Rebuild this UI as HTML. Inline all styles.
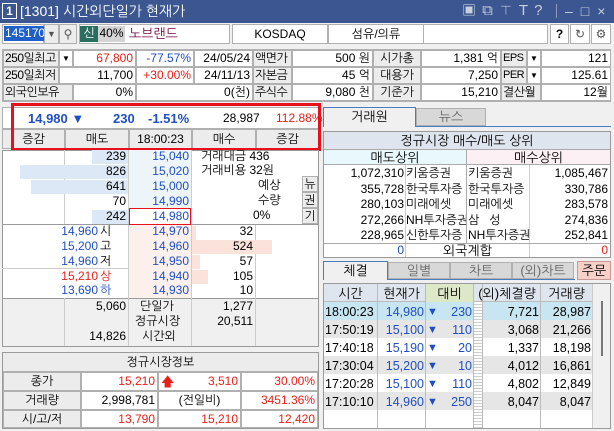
<!DOCTYPE html>
<html><head><meta charset="utf-8"><style>
*{margin:0;padding:0;box-sizing:border-box}
body{width:614px;height:431px;background:#f0f0f0;font-family:"Liberation Sans","NanumGothic","Noto Sans CJK KR",sans-serif;font-size:12px;color:#000;position:relative;overflow:hidden}
div{position:absolute}
.c{border:1px solid #b0b0b0;white-space:nowrap;overflow:hidden;padding:0 2px;line-height:15px}
.r{text-align:right}.m{text-align:center}
.g{background:#ececec}.w{background:#fff}
.red{color:#e8201a}.blu{color:#1f4fc0}
.t{white-space:nowrap;line-height:15px}
.n{padding:0 0 0 1px;letter-spacing:-0.5px}
</style></head><body>
<!-- title bar -->
<div style="left:0;top:0;width:614px;height:23px;background:#3b5691"></div>
<div style="left:2px;top:3px;width:15px;height:16px;border:1px solid #fff;color:#fff;font-weight:bold;line-height:14px;text-align:center;font-size:12px">1</div>
<div class="t" style="left:20px;top:3px;color:#fff;font-size:14px;line-height:16px">[1301] 시간외단일가 현재가</div>
<div class="t" style="left:462px;top:2px;color:#c8d0e0;font-size:15px;letter-spacing:6px;line-height:18px">▣⧉⊤T?</div>
<div style="left:556px;top:4px;width:1px;height:14px;background:#8a9abf"></div>
<div class="t" style="left:565px;top:2px;color:#c8d0e0;font-size:14px;letter-spacing:8px;line-height:18px">–□×</div>
<!-- row2 -->
<div class="c w" style="left:2px;top:24px;width:42px;height:20px"></div>
<div class="t" style="left:4px;top:26px;background:#1e5fc8;color:#fff;padding:0 1px;line-height:15px">145170</div>
<div class="c g m" style="left:44px;top:24px;width:15px;height:20px;font-size:9px;line-height:18px;color:#555">▼</div>
<div class="c g m" style="left:59px;top:24px;width:18px;height:20px;color:#555;line-height:18px">⚲</div>
<div class="c" style="left:79px;top:24px;width:151px;height:20px;background:#fff"></div>
<div class="t m" style="left:80px;top:26px;width:18px;height:16px;background:#2b6e60;color:#fff">신</div>
<div class="t m" style="left:98px;top:26px;width:27px;height:16px;background:#d4d4d4">40%</div>
<div class="t" style="left:129px;top:26px;color:#700040;font-size:13px">노브랜드</div>
<div class="c w m" style="left:232px;top:24px;width:96px;height:20px;line-height:18px">KOSDAQ</div>
<div class="c w m" style="left:328px;top:24px;width:96px;height:20px;line-height:18px">섬유/의류</div>
<div class="c w" style="left:423px;top:24px;width:125px;height:20px"></div>
<div class="c w m" style="left:550px;top:24px;width:19px;height:20px;font-weight:bold;line-height:18px">?</div>
<div class="c w m" style="left:570px;top:24px;width:20px;height:20px;line-height:18px;color:#555">↻</div>
<div class="c w m" style="left:591px;top:24px;width:20px;height:20px;line-height:18px;color:#555">⚙</div>
<!-- info table -->
<div class="c w" style="left:2px;top:49px;width:609px;height:53px"></div>
<div class="c g n" style="left:3px;top:50px;width:56px;height:17px">250일최고</div>
<div class="c w m" style="left:59px;top:50px;width:14px;height:17px;font-size:8px;padding:0">▼</div>
<div class="c w r red" style="left:73px;top:50px;width:63px;height:17px">67,800</div>
<div class="c w r blu" style="left:136px;top:50px;width:58px;height:17px">-77.57%</div>
<div class="c w r" style="left:194px;top:50px;width:59px;height:17px">24/05/24</div>
<div class="c g n" style="left:253px;top:50px;width:39px;height:17px">액면가</div>
<div class="c w r" style="left:292px;top:50px;width:81px;height:17px">500 원</div>
<div class="c g m" style="left:373px;top:50px;width:48px;height:17px">시가총</div>
<div class="c w r" style="left:421px;top:50px;width:80px;height:17px">1,381 억</div>
<div class="c g n" style="left:501px;top:50px;width:26px;height:17px;font-size:11px">EPS</div>
<div class="c w m" style="left:527px;top:50px;width:14px;height:17px;font-size:8px;padding:0">▼</div>
<div class="c w r" style="left:541px;top:50px;width:70px;height:17px">121</div>

<div class="c g n" style="left:3px;top:67px;width:56px;height:17px">250일최저</div>
<div class="c w r" style="left:59px;top:67px;width:77px;height:17px">11,700</div>
<div class="c w r red" style="left:136px;top:67px;width:58px;height:17px">+30.00%</div>
<div class="c w r" style="left:194px;top:67px;width:59px;height:17px">24/11/13</div>
<div class="c g n" style="left:253px;top:67px;width:39px;height:17px">자본금</div>
<div class="c w r" style="left:292px;top:67px;width:81px;height:17px">45 억</div>
<div class="c g m" style="left:373px;top:67px;width:48px;height:17px">대용가</div>
<div class="c w r" style="left:421px;top:67px;width:80px;height:17px">7,250</div>
<div class="c g n" style="left:501px;top:67px;width:26px;height:17px;font-size:11px">PER</div>
<div class="c w m" style="left:527px;top:67px;width:14px;height:17px;font-size:8px;padding:0">▼</div>
<div class="c w r" style="left:541px;top:67px;width:70px;height:17px">125.61</div>

<div class="c g n" style="left:3px;top:84px;width:70px;height:17px">외국인보유</div>
<div class="c w r" style="left:73px;top:84px;width:63px;height:17px">0%</div>
<div class="c w r" style="left:136px;top:84px;width:117px;height:17px">0(천)</div>
<div class="c g n" style="left:253px;top:84px;width:39px;height:17px">주식수</div>
<div class="c w r" style="left:292px;top:84px;width:81px;height:17px">9,080 천</div>
<div class="c g m" style="left:373px;top:84px;width:48px;height:17px">기준가</div>
<div class="c w r" style="left:421px;top:84px;width:80px;height:17px">15,210</div>
<div class="c g n" style="left:501px;top:84px;width:40px;height:17px">결산월</div>
<div class="c w r" style="left:541px;top:84px;width:70px;height:17px">12월</div>

<!-- price row -->
<div class="c w" style="left:2px;top:107px;width:317px;height:22px"></div>
<div class="t blu" style="left:28px;top:111px;font-weight:bold;font-size:13px">14,980 ▼</div>
<div class="t blu" style="left:113px;top:111px;font-weight:bold;font-size:13px">230</div>
<div class="t blu" style="left:148px;top:111px;font-weight:bold;font-size:13px">-1.51%</div>
<div class="t" style="left:223px;top:111px">28,987</div>
<div class="t red" style="left:276px;top:111px">112.88%</div>
<div class="c g m" style="left:2px;top:129px;width:63px;height:20px;line-height:18px">증감</div>
<div class="c g m" style="left:65px;top:129px;width:64px;height:20px;line-height:18px">매도</div>
<div class="c g m" style="left:129px;top:129px;width:63px;height:20px;line-height:18px">18:00:23</div>
<div class="c g m" style="left:192px;top:129px;width:64px;height:20px;line-height:18px">매수</div>
<div class="c g m" style="left:256px;top:129px;width:63px;height:20px;line-height:18px">증감</div>
<div style="left:11px;top:103px;width:310px;height:48px;border:3px solid #e8101a"></div>

<!-- order book -->
<div class="c w" style="left:2px;top:150px;width:317px;height:197px;border-color:#999"></div>
<div style="left:64px;top:150px;width:1px;height:75px;background:#ccc"></div>
<div style="left:128px;top:150px;width:1px;height:196px;background:#ccc"></div>
<div style="left:191px;top:150px;width:1px;height:196px;background:#ccc"></div>
<div style="left:255px;top:225px;width:1px;height:121px;background:#ccc"></div>
<div style="left:129px;top:150px;width:62px;height:75px;background:#eef5f8"></div>
<div style="left:129px;top:225px;width:62px;height:73px;background:#fcf0ec"></div>
<div style="left:92px;top:150px;width:36px;height:14px;background:#dde8f6"></div>
<div style="left:20px;top:165px;width:108px;height:14px;background:#dde8f6"></div>
<div style="left:31px;top:180px;width:97px;height:14px;background:#dde8f6"></div>
<div style="left:92px;top:210px;width:36px;height:14px;background:#dde8f6"></div>
<div style="left:192px;top:226px;width:4px;height:14px;background:#fbe3dc"></div>
<div style="left:192px;top:240px;width:80px;height:14px;background:#fbe3dc"></div>
<div style="left:192px;top:255px;width:8px;height:14px;background:#fbe3dc"></div>
<div style="left:192px;top:270px;width:16px;height:14px;background:#fbe3dc"></div>
<div style="left:2px;top:224px;width:317px;height:1px;background:#999"></div>
<div style="left:2px;top:268px;width:126px;height:1px;background:#ccc"></div>
<div class="t r" style="left:64px;top:149px;width:62px">239</div>
<div class="t r" style="left:64px;top:164px;width:62px">826</div>
<div class="t r" style="left:64px;top:179px;width:62px">641</div>
<div class="t r" style="left:64px;top:194px;width:62px">70</div>
<div class="t r" style="left:64px;top:209px;width:62px">242</div>
<div class="t r blu" style="left:128px;top:149px;width:61px">15,040</div>
<div class="t r blu" style="left:128px;top:164px;width:61px">15,020</div>
<div class="t r blu" style="left:128px;top:179px;width:61px">15,000</div>
<div class="t r blu" style="left:128px;top:194px;width:61px">14,990</div>
<div class="t r blu" style="left:129px;top:208px;width:62px;border:1px solid #e8101a;background:#fff;padding-right:1px">14,980</div>
<div class="t" style="left:201px;top:149px">거래대금 436</div>
<div class="t" style="left:201px;top:163px">거래비용 32원</div>
<div class="t" style="left:258px;top:178px">예상</div>
<div class="t" style="left:258px;top:193px">수량</div>
<div class="t" style="left:253px;top:208px">0%</div>
<div class="c g m" style="left:302px;top:176px;width:16px;height:16px;padding:0">뉴</div>
<div class="c g m" style="left:302px;top:192px;width:16px;height:16px;padding:0">권</div>
<div class="c g m" style="left:302px;top:208px;width:16px;height:16px;padding:0">기</div>
<div class="t r blu" style="left:4px;top:224px;width:94px">14,960</div><div class="t" style="left:100px;top:224px">시</div>
<div class="t r blu" style="left:4px;top:239px;width:94px">15,200</div><div class="t" style="left:100px;top:239px">고</div>
<div class="t r blu" style="left:4px;top:254px;width:94px">14,960</div><div class="t" style="left:100px;top:254px">저</div>
<div class="t r red" style="left:4px;top:269px;width:94px">15,210</div><div class="t red" style="left:100px;top:269px">상</div>
<div class="t r blu" style="left:4px;top:283px;width:94px">13,690</div><div class="t blu" style="left:100px;top:283px">하</div>
<div class="t r blu" style="left:128px;top:224px;width:61px">14,970</div>
<div class="t r blu" style="left:128px;top:239px;width:61px">14,960</div>
<div class="t r blu" style="left:128px;top:254px;width:61px">14,950</div>
<div class="t r blu" style="left:128px;top:269px;width:61px">14,940</div>
<div class="t r blu" style="left:128px;top:283px;width:61px">14,930</div>
<div class="t r" style="left:191px;top:224px;width:62px">32</div>
<div class="t r" style="left:191px;top:239px;width:62px">524</div>
<div class="t r" style="left:191px;top:254px;width:62px">57</div>
<div class="t r" style="left:191px;top:269px;width:62px">105</div>
<div class="t r" style="left:191px;top:283px;width:62px">10</div>
<div style="left:3px;top:298px;width:315px;height:48px;background:#f0f0f0;border-top:1px solid #999"></div>
<div style="left:64px;top:298px;width:1px;height:48px;background:#ccc"></div>
<div style="left:128px;top:298px;width:1px;height:48px;background:#ccc"></div>
<div style="left:191px;top:298px;width:1px;height:48px;background:#ccc"></div>
<div style="left:255px;top:298px;width:1px;height:48px;background:#ccc"></div>
<div class="t r" style="left:64px;top:299px;width:62px">5,060</div>
<div class="t r" style="left:64px;top:329px;width:62px">14,826</div>
<div class="t" style="left:140px;top:299px">단일가</div>
<div class="t" style="left:135px;top:314px">정규시장</div>
<div class="t" style="left:142px;top:329px">시간외</div>
<div class="t r" style="left:191px;top:299px;width:62px">1,277</div>
<div class="t r" style="left:191px;top:314px;width:62px">20,511</div>

<!-- market info -->
<div class="c" style="left:2px;top:352px;width:317px;height:77px;border-color:#999;background:#fff"></div>
<div class="c g m" style="left:3px;top:353px;width:315px;height:19px;border-width:0 0 1px 0;line-height:18px">정규시장정보</div>
<div class="c g m" style="left:3px;top:372px;width:78px;height:19px;line-height:17px">종가</div>
<div class="c w r red" style="left:81px;top:372px;width:77px;height:19px;line-height:17px">15,210</div>
<div class="c w r red" style="left:158px;top:372px;width:83px;height:19px;line-height:17px"><span style="float:left;font-size:13px">🡅</span>3,510</div>
<div class="c w r red" style="left:241px;top:372px;width:77px;height:19px;line-height:17px">30.00%</div>
<div class="c g m" style="left:3px;top:391px;width:78px;height:19px;line-height:17px">거래량</div>
<div class="c w r" style="left:81px;top:391px;width:77px;height:19px;line-height:17px">2,998,781</div>
<div class="c w m" style="left:158px;top:391px;width:83px;height:19px;line-height:17px">(전일비)</div>
<div class="c w r red" style="left:241px;top:391px;width:77px;height:19px;line-height:17px">3451.36%</div>
<div class="c g m" style="left:3px;top:410px;width:78px;height:18px;line-height:17px">시/고/저</div>
<div class="c w r red" style="left:81px;top:410px;width:77px;height:18px;line-height:17px">13,790</div>
<div class="c w r red" style="left:158px;top:410px;width:83px;height:18px;line-height:17px">15,210</div>
<div class="c w r red" style="left:241px;top:410px;width:77px;height:18px;line-height:17px">12,420</div>

<!-- right: 거래원 -->
<div style="left:323px;top:126px;width:288px;height:1px;background:#4a7cc0"></div>
<div class="c m" style="left:323px;top:107px;width:93px;height:20px;background:#f0f0f0;border-color:#4a7cc0;border-bottom:none;line-height:18px;font-size:13px">거래원</div>
<div class="c m" style="left:416px;top:108px;width:70px;height:18px;background:#d8d8d8;color:#666;line-height:16px;font-size:13px">뉴스</div>
<div class="c" style="left:323px;top:131px;width:288px;height:127px;border-color:#999;background:#fff"></div>
<div class="m" style="left:324px;top:132px;width:286px;height:18px;background:#dfe5ee;border-bottom:1px solid #aaa;line-height:17px;font-size:13px">정규시장 매수/매도 상위</div>
<div class="m" style="left:324px;top:150px;width:142px;height:15px;background:#e8f8fd;border-bottom:1px solid #aaa;line-height:15px;font-size:13px">매도상위</div>
<div class="m" style="left:467px;top:150px;width:143px;height:15px;background:#fdf0f4;border-bottom:1px solid #aaa;line-height:15px;font-size:13px">매수상위</div>
<div style="left:466px;top:150px;width:1px;height:93px;background:#aaa"></div>
<div style="left:405px;top:165px;width:1px;height:92px;background:#ccc"></div>
<div style="left:529px;top:165px;width:1px;height:92px;background:#ccc"></div>
<div style="left:324px;top:243px;width:286px;height:1px;background:#aaa"></div>
<div class="t r" style="left:324px;top:166px;width:80px;line-height:15.5px;white-space:pre">1,072,310
355,728
280,103
272,266
228,965</div>
<div class="t" style="left:406px;top:166px;width:60px;line-height:15.5px;white-space:pre;overflow:hidden">키움증권
한국투자증
미래에셋
NH투자증권
신한투자증</div>
<div class="t" style="left:468px;top:166px;width:61px;line-height:15.5px;white-space:pre;overflow:hidden">키움증권
한국투자증
미래에셋
삼   성
NH투자증권</div>
<div class="t r" style="left:530px;top:166px;width:78px;line-height:15.5px;white-space:pre">1,085,467
330,786
283,578
274,836
252,841</div>
<div class="t r blu" style="left:324px;top:243px;width:80px">0</div>
<div class="t m" style="left:406px;top:243px;width:123px;font-size:13px">외국계합</div>
<div class="t r red" style="left:530px;top:243px;width:78px">0</div>

<!-- 체결 tabs -->
<div style="left:323px;top:279px;width:252px;height:1px;background:#4a7cc0"></div>
<div class="c m" style="left:323px;top:261px;width:65px;height:19px;background:#f0f0f0;border-color:#4a7cc0;border-bottom:none;line-height:17px;font-size:13px">체결</div>
<div class="c m" style="left:388px;top:262px;width:62px;height:17px;background:#d8d8d8;color:#666;line-height:15px;font-size:13px">일별</div>
<div class="c m" style="left:450px;top:262px;width:62px;height:17px;background:#d8d8d8;color:#666;line-height:15px;font-size:13px">차트</div>
<div class="c m" style="left:512px;top:262px;width:62px;height:17px;background:#d8d8d8;color:#666;line-height:15px;font-size:13px">(외)차트</div>
<div class="c m" style="left:577px;top:261px;width:34px;height:19px;background:#f7d0c8;border-color:#c99;line-height:17px;font-size:13px">주문</div>
<!-- trades table -->
<div class="c" style="left:323px;top:283px;width:288px;height:146px;border-color:#999;background:#fff"></div>
<div class="m" style="left:324px;top:284px;width:268px;height:18px;background:#dfe5ee;border-bottom:1px solid #bbb"></div>
<div style="left:426px;top:284px;width:47px;height:18px;background:#dce8c8"></div>
<div style="left:592px;top:284px;width:18px;height:144px;background:#f0f0f0;border-left:1px solid #ccc"></div>
<div style="left:601px;top:301px;width:2px;height:55px;background:#777"></div>
<div style="left:324px;top:302px;width:268px;height:18px;background:#c8e6f2"></div>
<div style="left:324px;top:320px;width:268px;height:18px;background:#e6e6e6"></div>
<div style="left:324px;top:356px;width:268px;height:18px;background:#e6e6e6"></div>
<div style="left:324px;top:392px;width:268px;height:18px;background:#e6e6e6"></div>
<div style="left:377px;top:284px;width:1px;height:144px;background:#bbb"></div>
<div style="left:425px;top:284px;width:1px;height:144px;background:#bbb"></div>
<div style="left:473px;top:284px;width:1px;height:144px;background:#bbb"></div>
<div style="left:474px;top:302px;width:8px;height:126px;background:repeating-linear-gradient(#fff 0,#fff 2px,#ccc 2px,#ccc 3px)"></div>
<div style="left:482px;top:284px;width:1px;height:144px;background:#bbb"></div>
<div style="left:540px;top:284px;width:1px;height:144px;background:#bbb"></div>
<div class="t m" style="left:324px;top:286px;width:53px;font-size:13px">시간</div>
<div class="t m" style="left:378px;top:286px;width:47px;font-size:13px">현재가</div>
<div class="t m" style="left:426px;top:286px;width:47px;font-size:13px">대비</div>
<div class="t m" style="left:474px;top:286px;width:66px;font-size:13px">(외)체결량</div>
<div class="t m" style="left:541px;top:286px;width:51px;font-size:13px">거래량</div>
<div class="t" style="left:325px;top:303px;line-height:18px;white-space:pre;font-size:12.5px">18:00:23
17:50:19
17:40:18
17:30:04
17:20:28
17:10:10</div>
<div class="t r blu" style="left:378px;top:303px;width:46px;line-height:18px;white-space:pre;font-size:12.5px">14,980
15,100
15,190
15,200
15,100
14,960</div>
<div class="t blu" style="left:427px;top:303px;line-height:18px;white-space:pre;font-size:11px">▼
▼
▼
▼
▼
▼</div>
<div class="t r blu" style="left:426px;top:303px;width:46px;line-height:18px;white-space:pre;font-size:12.5px">230
110
20
10
110
250</div>
<div class="t r" style="left:483px;top:303px;width:56px;line-height:18px;white-space:pre;font-size:12.5px">7,721
3,068
1,337
4,012
4,802
8,047</div>
<div class="t r" style="left:541px;top:303px;width:50px;line-height:18px;white-space:pre;font-size:12.5px">28,987
21,266
18,198
16,861
12,849
8,047</div>
</body></html>
